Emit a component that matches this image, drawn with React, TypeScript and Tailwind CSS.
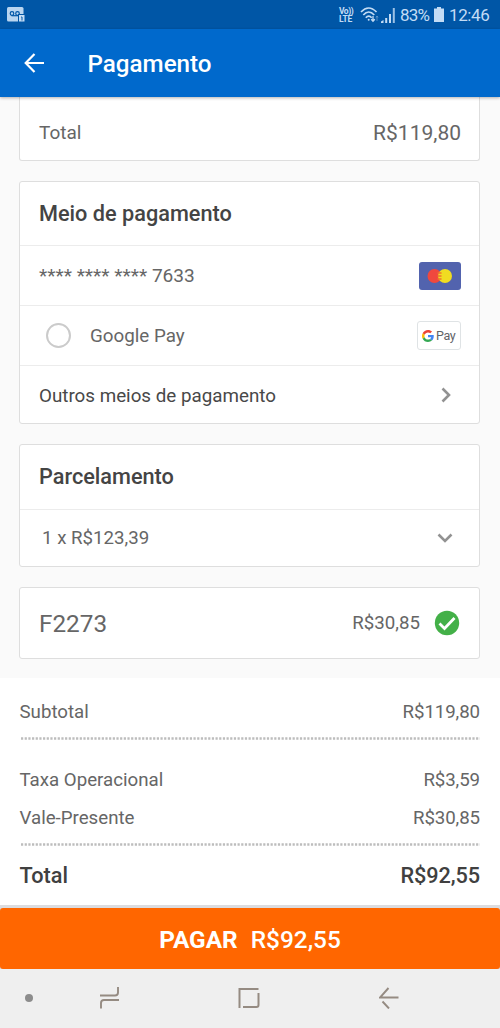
import type { ReactNode } from "react";

function StatusBar() {
  return (
    <div className="flex h-[29px] items-center bg-[#0056a6] pl-[7px] text-[#c3dcf5]">
      <svg width="19" height="16" viewBox="0 0 19 16">
        <rect width="16.5" height="14.5" rx="1.5" fill="#b9d5f0" />
        <circle cx="5" cy="6.5" r="1.8" fill="none" stroke="#0056a6" strokeWidth="1.2" />
        <circle cx="10.5" cy="6.5" r="1.8" fill="none" stroke="#0056a6" strokeWidth="1.2" />
        <path d="M4.500 8.700h6.500" stroke="#0056a6" strokeWidth="1.2" />
        <rect x="11.500" y="7.500" width="6.500" height="7.500" fill="#c3dcf5" stroke="#0056a6" />
        <path d="M14.200 10h.8v3.500" fill="none" stroke="#0056a6" />
      </svg>
      <div className="ml-auto flex items-center">
        <div className="flex w-[18px] flex-col text-[8.500px] leading-[8px] font-bold whitespace-nowrap">
          <span className="tracking-[-0.500px]">Vo))</span>
          <span className="tracking-[-0.200px]">LTE</span>
        </div>
        <svg className="ml-[3px]" width="21" height="18" viewBox="0 0 21 18" fill="none" stroke="currentColor" strokeWidth="1.700">
          <path d="M1 6Q8.500-2 16.500 6" />
          <path d="M3.300 9Q8.700 3 14.300 9" />
          <path d="M5.800 11.800Q8.700 8.500 11.700 11.800" />
          <circle cx="8.700" cy="13.800" r="1" fill="currentColor" stroke="none" />
          <path d="M13 10v5M11.200 13.300l1.800 1.900 1.800-1.900" strokeWidth="1.300" />
          <path d="M17 15v-5M16 11.500l1-1.300 1 1.300" strokeWidth="0.800" opacity="0.500" />
        </svg>
        <svg className="mt-px" width="15" height="15" viewBox="0 0 15 15" fill="currentColor">
          <path d="M0 15v-1.500l2.500-1.500v3z" />
          <path d="M4.200 10h2v5h-2zM8 6h2v9H8z" />
          <path d="M11.800 0h2v15h-2z" opacity="0.800" />
        </svg>
        <span className="ml-[4px] inline-block w-[30px] pt-[2px] text-[17px] tracking-[-0.800px] whitespace-nowrap">83%</span>
        <svg className="ml-[4px]" width="10" height="15" viewBox="0 0 10 15">
          <path d="M3 0h4v1.500h3V15H0V1.500h3z" fill="#c3dcf5" />
        </svg>
        <span className="ml-[5px] inline-block w-[51px] pt-[2px] text-[17px] tracking-[-0.400px]">12:46</span>
      </div>
    </div>
  );
}

function AppBar() {
  return (
    <header className="relative z-10 flex h-[68px] items-center bg-[#0069cc] pl-[24px] text-white shadow-[0_1px_3px_rgba(0,0,0,0.3)]">
      <svg width="21" height="20" viewBox="0 0 21 20" fill="none" stroke="currentColor" strokeWidth="2.200">
        <path d="M20 10H2M10.500 1 1.700 10l8.800 9" />
      </svg>
      <h1 className="ml-[42.500px] pt-[2px] text-[24.200px] leading-[30px] font-medium">Pagamento</h1>
    </header>
  );
}

function Card({ children, className = "" }: { children: ReactNode; className?: string }) {
  return <section className={`rounded-[3px] border border-[#dedede] bg-white ${className}`}>{children}</section>;
}

function MastercardLogo() {
  return (
    <svg width="42" height="28" viewBox="0 0 42 28">
      <rect width="42" height="28" rx="3" fill="#5263ae" />
      <circle cx="15.500" cy="14" r="7" fill="#f0483e" />
      <circle cx="26" cy="14" r="7" fill="#f0dc22" />
      <path d="M18.500 11h4M18.500 14h4M18.500 17h4" stroke="#f0702f" strokeWidth="1.300" />
    </svg>
  );
}

function GooglePayLogo() {
  return (
    <div className="flex h-[29px] w-[44px] items-center rounded-[3px] border border-[#dfe3e5] pl-[4px]">
      <svg width="12" height="12" viewBox="0 0 48 48">
        <path fill="#ea4335" d="M24 9.500c3.540 0 6.710 1.220 9.210 3.600l6.850-6.850C35.900 2.380 30.470 0 24 0 14.620 0 6.510 5.380 2.560 13.220l7.980 6.190C12.430 13.720 17.740 9.500 24 9.500z" />
        <path fill="#4285f4" d="M46.980 24.550c0-1.570-.15-3.090-.38-4.550H24v9.020h12.940c-.58 2.960-2.260 5.480-4.780 7.180l7.730 6c4.510-4.180 7.090-10.360 7.090-17.650z" />
        <path fill="#fbbc05" d="M10.530 28.590c-.48-1.450-.76-2.990-.76-4.590s.27-3.140.76-4.590l-7.980-6.190C.92 16.460 0 20.120 0 24c0 3.880.92 7.540 2.560 10.780l7.970-6.190z" />
        <path fill="#34a853" d="M24 48c6.480 0 11.930-2.130 15.890-5.810l-7.730-6c-2.150 1.450-4.920 2.300-8.160 2.300-6.260 0-11.570-4.220-13.470-9.910l-7.980 6.190C6.510 42.620 14.620 48 24 48z" />
      </svg>
      <span className="ml-[2px] pt-px text-[12.500px] leading-none tracking-[-0.400px] text-[#5f6368]">Pay</span>
    </div>
  );
}

function SummaryRow({ label, value, className = "h-[38px]" }: { label: string; value: string; className?: string }) {
  return (
    <div className={`flex items-center justify-between ${className}`}>
      <span>{label}</span>
      <span className="tracking-[-0.100px]">{value}</span>
    </div>
  );
}

function DottedLine() {
  return (
    <svg className="block" width="460" height="3" viewBox="0 0 460 3">
      <path d="M1 1.500h459" stroke="#bdbdbd" strokeWidth="2.400" strokeDasharray="2.200 1.470" />
    </svg>
  );
}

function NavBar() {
  return (
    <nav className="flex h-[59px] items-center bg-[#efefef] pb-[2px] pl-[25px] text-[#958b82]">
      <span className="size-[8px] rounded-full bg-[#8c8c8c]" />
      <svg className="ml-[66px]" width="21" height="23" viewBox="0 0 21 23" fill="none" stroke="currentColor" strokeWidth="1.900">
        <path d="M1 9.500h15q3 0 3-3V1M20 14H5q-3 0-3 3v5.500" />
      </svg>
      <svg className="ml-[118px]" width="22" height="22" viewBox="0 0 22 22" fill="none" stroke="currentColor" strokeWidth="2">
        <path d="M1.500 21V2h19M20.500 6v12q0 2-2 2H5" />
      </svg>
      <svg className="ml-[119px]" width="20" height="22" viewBox="0 0 20 22" fill="none" stroke="currentColor" strokeWidth="1.900">
        <path d="M9.500 1 1 10.500h18.500M3.500 14.500l6.500 7" />
      </svg>
    </nav>
  );
}

export default function App() {
  return (
    <div className="h-[1028px] w-[500px] overflow-hidden bg-white font-['Roboto',sans-serif] text-[#666666]">
      <StatusBar />
      <AppBar />

      <main className="flex h-[581px] flex-col bg-[#fafafa] pr-5 pl-[19px]">
        <Card className="flex h-[64px] items-center justify-between rounded-t-none border-t-0 pt-[9px] pr-[18px] pl-[19px]">
          <span className="text-[19px]">Total</span>
          <span className="pt-px text-[21px]">R$119,80</span>
        </Card>

        <Card className="mt-[20px] h-[243px] text-[18.800px]">
          <h2 className="flex h-[64px] items-center border-b border-[#ececec] px-[19px] pt-[2px] text-[21.700px] font-medium text-[#444444]">
            Meio de pagamento
          </h2>
          <div className="flex h-[60px] items-center justify-between border-b border-[#ececec] pr-[18.500px] pl-[19px]">
            <span className="pt-[2px] text-[19.100px]">**** **** **** 7633</span>
            <MastercardLogo />
          </div>
          <div className="flex h-[60px] items-center border-b border-[#ececec] pr-[18px] pl-[26px]">
            <span className="size-[25px] rounded-full border-2 border-[#cbcbcb]" />
            <span className="mr-auto ml-[19px] pt-[2px]">Google Pay</span>
            <GooglePayLogo />
          </div>
          <div className="flex h-[57px] items-center justify-between pr-[28px] pl-[19px] text-[#484848]">
            <span className="pt-[3px]">Outros meios de pagamento</span>
            <svg width="10" height="16" viewBox="0 0 10 16" fill="none" stroke="#929292" strokeWidth="2.600">
              <path d="m1.500 1.500 6.500 6.500-6.500 6.500" />
            </svg>
          </div>
        </Card>

        <Card className="mt-[20px] h-[123px]">
          <h2 className="flex h-[65px] items-center border-b border-[#ececec] px-[19px] pt-px text-[21.700px] font-medium text-[#444444]">
            Parcelamento
          </h2>
          <div className="flex h-[56px] items-center justify-between pr-[26px] pl-[22px] text-[18.700px]">
            <span className="pt-px">1 x R$123,39</span>
            <svg width="16" height="10" viewBox="0 0 16 10" fill="none" stroke="#929292" strokeWidth="2.600">
              <path d="m1.500 1.500 6.500 6.500 6.500-6.500" />
            </svg>
          </div>
        </Card>

        <Card className="mt-[20px] flex h-[72px] items-center pr-[19px] pl-[19px]">
          <span className="mr-auto pt-[2px] text-[24.300px]">F2273</span>
          <span className="pt-px text-[18.700px]">R$30,85</span>
          <svg className="mb-px ml-[14px]" width="26" height="26" viewBox="0 0 26 26">
            <circle cx="13" cy="13" r="12.200" fill="#43b048" />
            <path d="m5.500 13.500 5 5L20.500 8" fill="none" stroke="white" strokeWidth="2.800" />
          </svg>
        </Card>
      </main>

      <section className="h-[227px] pt-[15px] pr-5 pl-[19.500px] text-[18.700px]">
        <SummaryRow label="Subtotal" value="R$119,80" />
        <div className="pt-[6px] pb-[21px]">
          <DottedLine />
        </div>
        <SummaryRow label="Taxa Operacional" value="R$3,59" />
        <SummaryRow label="Vale-Presente" value="R$30,85" />
        <div className="pt-[6px]">
          <DottedLine />
        </div>
        <SummaryRow label="Total" value="R$92,55" className="h-[58px] pt-[2px] text-[21.700px] font-medium text-[#404040]" />
      </section>

      <div className="bg-[#dcdcdf] pt-[3px]">
        <button className="flex h-[61px] w-full items-center justify-center rounded-[3px] bg-[#ff6600] pt-[3px] text-[24.400px] text-white">
          <span className="font-bold">PAGAR</span>
          <span className="ml-[13px] font-medium">R$92,55</span>
        </button>
      </div>
      <NavBar />
    </div>
  );
}
